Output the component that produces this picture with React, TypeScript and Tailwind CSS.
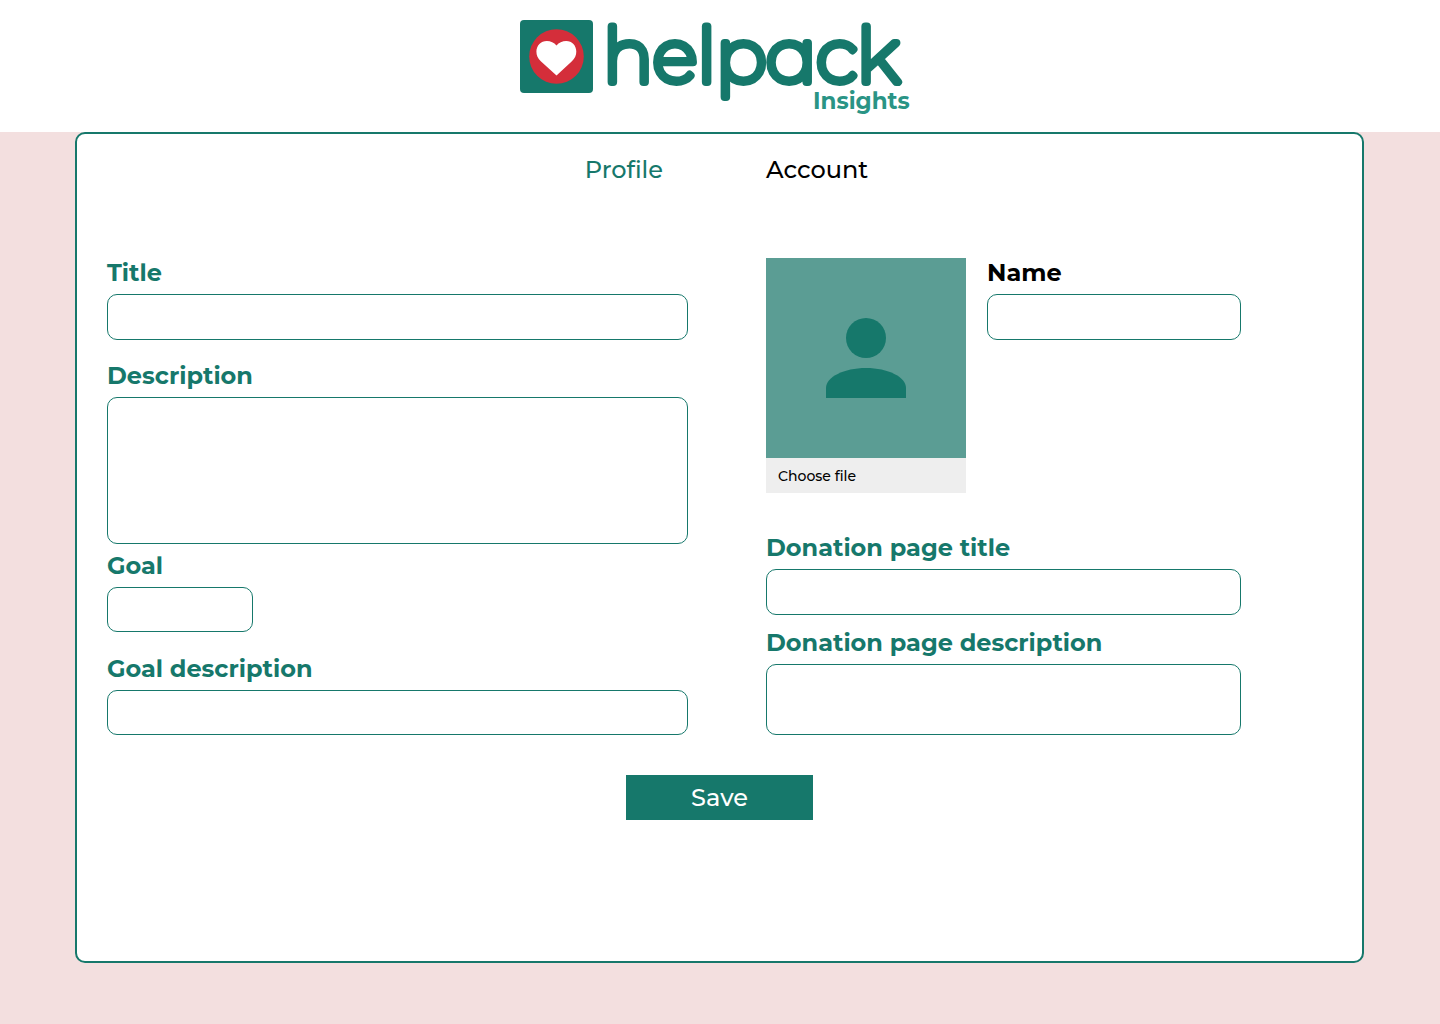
import type { ReactNode } from "react";

const fieldStyle =
  "block rounded-[10px] border border-[#16786b] bg-white px-3 text-lg text-black outline-none focus:ring-2 focus:ring-[#16786b]/30";

function Logo() {
  return (
    <svg width="392" height="132" viewBox="0 -20 392 132" role="img" aria-label="helpack Insights">
      <rect x="0" y="0" width="73" height="73" rx="4" fill="#16786b" />
      <circle cx="36.5" cy="36.5" r="27.3" fill="#d42e3a" />
      <path
        d="M36.5 55.5 L20.8 41.2 C17.8 38.4 16.4 35.4 16.4 31.6 C16.4 25.6 21 21 26.8 21 C30.7 21 34.1 22.6 36.5 25.4 C38.9 22.6 42.3 21 46.2 21 C52 21 56.3 25.6 56.3 31.6 C56.3 35.4 54.9 38.4 51.9 41.2 Z"
        fill="#fff"
      />
      <text
        x="83"
        y="62"
        fontSize="75"
        fill="#16786b"
        stroke="#16786b"
        strokeWidth="8"
        strokeLinejoin="round"
        className="font-['Montserrat',sans-serif] font-thin"
      >
        help
        <tspan className="[font-feature-settings:'ss01','salt']">a</tspan>
        ck
      </text>
      <text x="293" y="89" fontSize="23" fill="#2a9485" className="font-['Montserrat',sans-serif] font-bold">
        Insights
      </text>
    </svg>
  );
}

function Field({
  id,
  label,
  tone = "text-[#16786b]",
  children,
}: {
  id: string;
  label: string;
  tone?: string;
  children: ReactNode;
}) {
  return (
    <div className="flex flex-col gap-1.5">
      <label htmlFor={id} className={`text-2xl leading-[30px] font-bold whitespace-nowrap ${tone}`}>
        {label}
      </label>
      {children}
    </div>
  );
}

function PhotoPicker() {
  return (
    <div className="w-[200px] shrink-0">
      <div className="flex h-[200px] items-center justify-center bg-[#5b9d94]">
        <svg width="80" height="80" viewBox="0 0 80 80" fill="#16786b" aria-hidden="true">
          <circle cx="40" cy="20" r="20" />
          <path d="M0 80V70C0 59 18 50 40 50S80 59 80 70V80Z" />
        </svg>
      </div>
      <label
        htmlFor="photo"
        className="flex h-[35px] cursor-pointer items-center bg-[#eee] px-3 text-sm font-medium text-black"
      >
        Choose file
      </label>
      <input id="photo" type="file" accept="image/*" className="sr-only" />
    </div>
  );
}

export default function App() {
  return (
    <div className="min-h-screen bg-[#f3dfdf] pb-[61px] font-['Montserrat','Inter',sans-serif]">
      <header className="flex h-[132px] justify-center bg-white pr-2">
        <Logo />
      </header>

      <main className="mr-[76px] ml-[75px] rounded-[10px] border-2 border-[#16786b] bg-white pt-5 pb-[141px]">
        <nav className="grid grid-cols-[581fr_475fr] gap-[78px] pr-[121px] pl-[30px] text-2xl leading-8 font-medium">
          <a href="#profile" className="mr-[25px] justify-self-end text-[#16786b]">
            Profile
          </a>
          <a href="#account" className="justify-self-start text-black">
            Account
          </a>
        </nav>

        <form className="mt-[72px]" onSubmit={(e) => e.preventDefault()}>
          <div className="grid grid-cols-[581fr_475fr] gap-[78px] pr-[121px] pl-[30px]">
            <div>
              <Field id="title" label="Title">
                <input id="title" type="text" className={`h-[46px] w-full ${fieldStyle}`} />
              </Field>
              <div className="mt-[21px]">
                <Field id="description" label="Description">
                  <textarea id="description" className={`h-[147px] w-full resize-none py-2 ${fieldStyle}`} />
                </Field>
              </div>
              <div className="mt-[7px]">
                <Field id="goal" label="Goal">
                  <input id="goal" type="text" className={`h-[45px] w-[146px] ${fieldStyle}`} />
                </Field>
              </div>
              <div className="mt-[22px]">
                <Field id="goal-description" label="Goal description">
                  <input id="goal-description" type="text" className={`h-[45px] w-full ${fieldStyle}`} />
                </Field>
              </div>
            </div>

            <div>
              <div className="flex gap-[21px]">
                <PhotoPicker />
                <div className="min-w-0 flex-1">
                  <Field id="name" label="Name" tone="text-black">
                    <input id="name" type="text" className={`h-[46px] w-full ${fieldStyle}`} />
                  </Field>
                </div>
              </div>
              <div className="mt-10">
                <Field id="donation-title" label="Donation page title">
                  <input id="donation-title" type="text" className={`h-[46px] w-full ${fieldStyle}`} />
                </Field>
              </div>
              <div className="mt-[13px]">
                <Field id="donation-description" label="Donation page description">
                  <textarea
                    id="donation-description"
                    className={`h-[71px] w-full resize-none py-2 ${fieldStyle}`}
                  />
                </Field>
              </div>
            </div>
          </div>

          <button
            type="submit"
            className="mx-auto mt-10 block h-[45px] w-[187px] cursor-pointer bg-[#16786b] text-2xl leading-8 font-medium text-white"
          >
            Save
          </button>
        </form>
      </main>
    </div>
  );
}
